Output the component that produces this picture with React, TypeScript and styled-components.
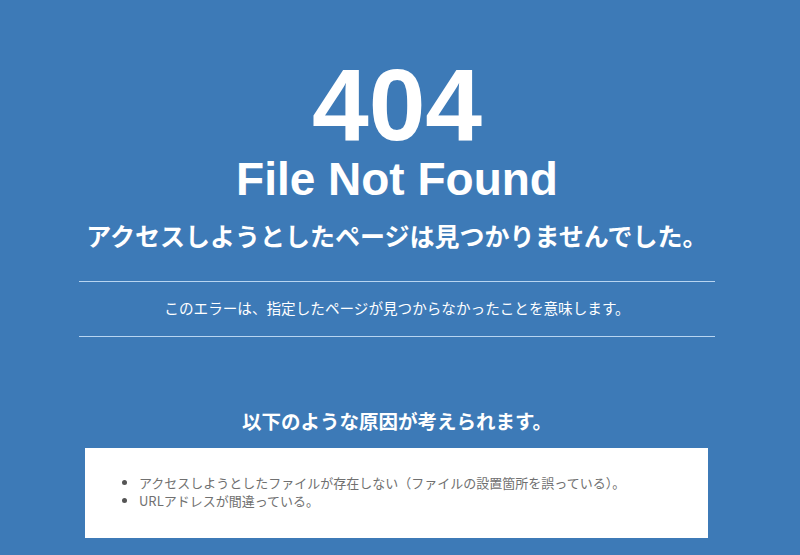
import React from 'react';
import styled, { createGlobalStyle } from 'styled-components';

const GlobalStyle = createGlobalStyle`
  html, body {
    margin: 0;
    padding: 0;
    background: #3d7ab7;
  }
`;

const Page = styled.div`
  min-height: 100vh;
  box-sizing: border-box;
  padding: 54px 6px 0 0;
  background: #3d7ab7;
  color: #ffffff;
  font-family: 'Liberation Sans', 'Noto Sans CJK JP', sans-serif;
  text-align: center;
`;

const Wrapper = styled.div`
  width: 636px;
  margin: 0 auto;
`;

const Code = styled.h1`
  margin: 0;
  font-size: 102px;
  line-height: 102px;
  font-weight: 700;
`;

const Title = styled.h2`
  margin: 0;
  font-size: 46px;
  line-height: 46px;
  font-weight: 700;
`;

const Lead = styled.h3`
  margin: 21px -40px 0;
  font-family: 'Noto Sans CJK JP', sans-serif;
  font-size: 25px;
  line-height: 25px;
  font-weight: 700;
  white-space: nowrap;
`;

const Divider = styled.div`
  margin-top: 33px;
  padding: 18px 0 21px;
  border-top: 1px solid #b8d5f1;
  border-bottom: 1px solid #b8d5f1;
`;

const Note = styled.p`
  margin: 0;
  font-family: 'Noto Sans CJK JP', sans-serif;
  font-size: 14.6px;
  line-height: 15px;
`;

const ReasonTitle = styled.h4`
  margin: 74px 0 0;
  font-family: 'Noto Sans CJK JP', sans-serif;
  font-size: 19.5px;
  line-height: 20px;
  font-weight: 700;
`;

const ReasonBox = styled.div`
  margin: 17px 7px 0 6px;
  padding: 26px 0 28px 14px;
  background: #ffffff;
  text-align: left;
`;

const ReasonList = styled.ul`
  margin: 0;
  padding-left: 40px;
  list-style: disc;
`;

const ReasonItem = styled.li`
  font-family: 'Noto Sans CJK JP', sans-serif;
  font-size: 13px;
  line-height: 18px;
  color: #707070;

  &::marker {
    color: #555555;
  }
`;

const reasons = [
  'アクセスしようとしたファイルが存在しない（ファイルの設置箇所を誤っている）。',
  'URLアドレスが間違っている。',
];

export default function App() {
  return (
    <>
      <GlobalStyle />
      <Page>
        <Wrapper>
          <Code>404</Code>
          <Title>File Not Found</Title>
          <Lead>アクセスしようとしたページは見つかりませんでした。</Lead>
          <Divider>
            <Note>このエラーは、指定したページが見つからなかったことを意味します。</Note>
          </Divider>
          <ReasonTitle>以下のような原因が考えられます。</ReasonTitle>
          <ReasonBox>
            <ReasonList>
              {reasons.map((r) => (
                <ReasonItem key={r}>{r}</ReasonItem>
              ))}
            </ReasonList>
          </ReasonBox>
        </Wrapper>
      </Page>
    </>
  );
}
